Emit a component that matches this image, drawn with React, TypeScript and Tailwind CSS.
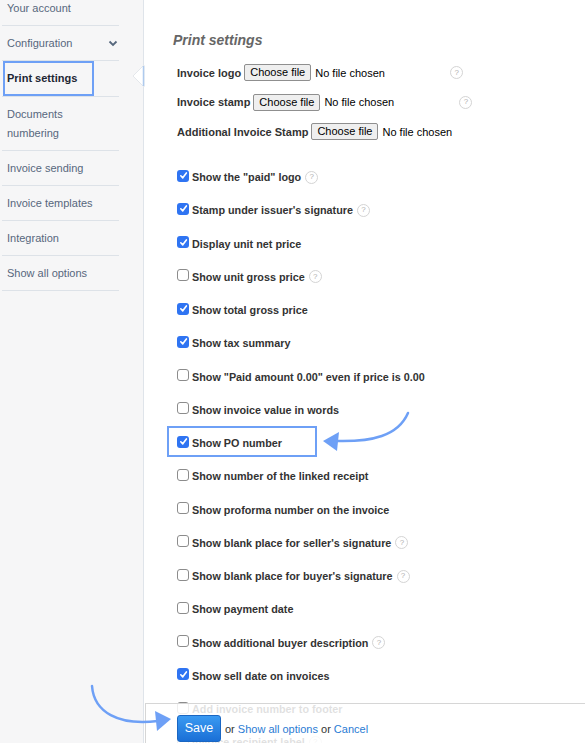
import React from "react";

type Option = {
  label: string;
  checked: boolean;
  help?: boolean;
};

const menu = [
  { label: "Your account", h: "h-[35px]" },
  { label: "Configuration", h: "h-[35px]", chevron: true },
  { label: "Print settings", h: "h-[36px]", active: true },
  { label: "Documents numbering", h: "h-[54px]", wrap: true },
  { label: "Invoice sending", h: "h-[35px]" },
  { label: "Invoice templates", h: "h-[35px]" },
  { label: "Integration", h: "h-[35px]" },
  { label: "Show all options", h: "h-[35px]" },
];

const options: Option[] = [
  { label: 'Show the "paid" logo', checked: true, help: true },
  { label: "Stamp under issuer's signature", checked: true, help: true },
  { label: "Display unit net price", checked: true },
  { label: "Show unit gross price", checked: false, help: true },
  { label: "Show total gross price", checked: true },
  { label: "Show tax summary", checked: true },
  { label: 'Show "Paid amount 0.00" even if price is 0.00', checked: false },
  { label: "Show invoice value in words", checked: false },
  { label: "Show PO number", checked: true },
  { label: "Show number of the linked receipt", checked: false },
  { label: "Show proforma number on the invoice", checked: false },
  { label: "Show blank place for seller's signature", checked: false, help: true },
  { label: "Show blank place for buyer's signature", checked: false, help: true },
  { label: "Show payment date", checked: false },
  { label: "Show additional buyer description", checked: false, help: true },
  { label: "Show sell date on invoices", checked: true },
  { label: "Add invoice number to footer", checked: false },
  { label: "Invoice recipient label", checked: false, help: true },
];

function Help() {
  return (
    <span className="ml-[4px] inline-flex h-[13px] w-[13px] items-center justify-center rounded-full border border-[#d4d4d4] text-[8px] leading-none text-[#b0b0b0]">
      ?
    </span>
  );
}

function Checkbox({ checked }: { checked: boolean }) {
  if (checked) {
    return (
      <span className="mb-[3px] flex h-[12px] w-[12px] shrink-0 items-center justify-center rounded-[3px] bg-[#2f74f2]">
        <svg width="9" height="9" viewBox="0 0 10 10">
          <path d="M2 5.3 L4.2 7.6 L8.2 2.2" fill="none" stroke="white" strokeWidth="1.8" strokeLinecap="round" strokeLinejoin="round" />
        </svg>
      </span>
    );
  }
  return <span className="mb-[3px] h-[12px] w-[12px] shrink-0 rounded-[3px] border border-[#8c8c8c] bg-white" />;
}

function FileRow({ label, help }: { label: string; help: boolean }) {
  return (
    <div className="flex h-[29.5px] items-center text-[11px]">
      <span className="font-bold text-[#333]">{label}</span>
      <span className="ml-[3px] flex w-[202px] items-center">
        <span className="rounded-[2px] border border-[#8f8f8f] bg-[#efefef] px-[5px] text-[11px] leading-[15px] text-black">
          Choose file
        </span>
        <span className="ml-[4px] text-[11px] text-black">No file chosen</span>
      </span>
      {help ? <Help /> : null}
    </div>
  );
}

export default function App() {
  return (
    <div className="relative flex h-[743px] w-[585px] overflow-hidden bg-white font-['Liberation_Sans',Arial,sans-serif]">
      <aside className="w-[144px] shrink-0 border-r border-[#dfe4ea] bg-[#f6f6f7]">
        <ul className="-mt-[9px] ml-[2px] w-[117px]">
          {menu.map((item) => (
            <li
              key={item.label}
              className={`flex ${item.h} items-center justify-between border-b border-[#dde2e8] pl-[5px] text-[11px] ${
                item.active ? "font-bold text-[#1d2633]" : "text-[#56677d]"
              }`}
            >
              <span className={item.wrap ? "w-[70px] leading-[19px]" : ""}>{item.label}</span>
              {item.chevron ? (
                <svg width="10" height="7" viewBox="0 0 10 7" className="mr-[1px]">
                  <path d="M1.5 1.5 L5 5 L8.5 1.5" fill="none" stroke="#56677d" strokeWidth="1.8" />
                </svg>
              ) : null}
            </li>
          ))}
        </ul>
      </aside>

      <main className="flex-1 pl-[29px]">
        <h2 className="mt-[31px] text-[14px] leading-[18px] font-bold italic text-[#666]">Print settings</h2>
        <div className="mt-[9px] ml-[4px]">
          <FileRow label="Invoice logo" help />
          <FileRow label="Invoice stamp" help />
          <FileRow label="Additional Invoice Stamp" help={false} />
        </div>
        <div className="mt-[14px] ml-[4px]">
          {options.map((o) => (
            <div key={o.label} className="flex h-[33.25px] items-center">
              <Checkbox checked={o.checked} />
              <span className="ml-[3px] text-[10.8px] font-bold text-[#333]">{o.label}</span>
              {o.help ? <Help /> : null}
            </div>
          ))}
        </div>
      </main>

      {/* pointer of the active menu item */}
      <svg className="absolute left-[132px] top-[64px]" width="13" height="24" viewBox="0 0 13 24">
        <polygon points="1,12 12,1 12,23" fill="white" stroke="#e4e7eb" strokeWidth="1" />
        <line x1="11.5" y1="2" x2="11.5" y2="22" stroke="#aecaee" strokeWidth="1.5" />
      </svg>

      <div className="absolute bottom-0 left-[145px] right-0 top-[703px] flex items-start border-t border-l border-[#d6d6d6] bg-white/85 pt-[11px] pl-[31px] text-[11px]">
        <button className="h-[27px] w-[44px] rounded-[3px] border border-[#1a66c2] bg-gradient-to-b from-[#3a9af2] to-[#1a6fd6] text-[12.5px] text-white">
          Save
        </button>
        <span className="ml-[4px] mt-[6px] text-[#333]">
          or <span className="text-[#2a7bd4]">Show all options</span> or{" "}
          <span className="text-[#2a7bd4]">Cancel</span>
        </span>
      </div>

      {/* annotations */}
      <svg className="pointer-events-none absolute inset-0" width="585" height="743" viewBox="0 0 585 743">
        <rect x="4" y="62" width="89" height="33" fill="none" stroke="#6ea0f6" strokeWidth="2" />
        <rect x="168" y="427" width="148" height="29" fill="none" stroke="#6ea0f6" strokeWidth="2" />
        <path d="M408 413 C398 436 372 442 336 441" fill="none" stroke="#6ea0f6" strokeWidth="2.5" strokeLinecap="round" />
        <polygon points="323,441 339,432 337,451" fill="#6ea0f6" />
        <path d="M92 686 C94 712 118 726 158 721" fill="none" stroke="#6ea0f6" strokeWidth="2.5" strokeLinecap="round" />
        <polygon points="171,719 155,711 157,731" fill="#6ea0f6" />
      </svg>
    </div>
  );
}
